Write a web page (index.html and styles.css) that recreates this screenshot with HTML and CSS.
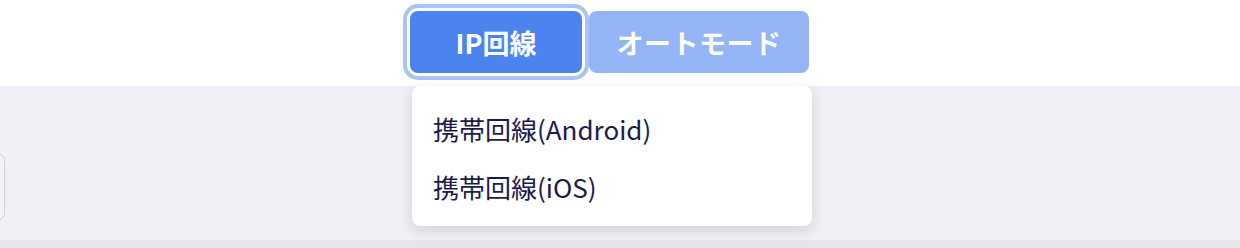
FILE: index.html
```html
<!DOCTYPE html>
<html lang="ja">
<head>
    <meta charset="UTF-8">
    <meta name="viewport" content="width=device-width, initial-scale=1.0">
    <title>回線選択</title>
    <link rel="stylesheet" href="styles.css">
</head>
<body>
    <div class="topbar">
        <div class="mode-switch">
            <button class="mode-btn active">IP回線</button>
            <button class="mode-btn muted">オートモード</button>
            <ul class="line-menu">
                <li>携帯回線(Android)</li>
                <li>携帯回線(iOS)</li>
            </ul>
        </div>
    </div>
    <div class="content">
        <div class="side-box"></div>
    </div>
    <div class="footer-line"></div>
</body>
</html>
```

FILE: styles.css
```css
body {
    margin: 0;
    font-family: "Noto Sans CJK JP", "Noto Sans", sans-serif;
    background-color: #fff;
    overflow: hidden;
}
.topbar {
    height: 86px;
    display: flex;
    justify-content: center;
    align-items: flex-start;
    padding-right: 21px;
    box-sizing: border-box;
}
.mode-switch {
    position: relative;
    display: flex;
    gap: 7px;
    margin-top: 11px;
}
.mode-btn {
    height: 62px;
    border: none;
    border-radius: 8px;
    color: #fff;
    font-family: inherit;
    font-size: 27px;
    font-weight: 700;
    padding: 0;
    cursor: pointer;
}
.mode-btn.active {
    width: 172px;
    background-color: #4b84ee;
    box-shadow: 0 0 0 3px #fff, 0 0 0 7px #a8c4f5;
}
.mode-btn.muted {
    width: 220px;
    letter-spacing: 0.5px;
    background-color: #93b4f5;
}
.line-menu {
    position: absolute;
    top: 75px;
    left: 2px;
    width: 400px;
    margin: 0;
    padding: 14px 0 10px;
    list-style: none;
    background-color: #fff;
    border-radius: 8px;
    box-shadow: 0 4px 14px rgba(30, 30, 60, 0.14);
    z-index: 2;
}
.line-menu li {
    height: 58px;
    line-height: 58px;
    padding-left: 21px;
    font-size: 26px;
    color: #1b1a4a;
}
.content {
    height: 154px;
    background-color: #f0eff5;
    display: flex;
    align-items: flex-start;
}
.side-box {
    width: 100px;
    height: 66px;
    margin-left: -97px;
    margin-top: 67px;
    border: 1px solid #cfcfd4;
    border-radius: 8px;
    background-color: #f2f1f6;
}
.footer-line {
    height: 8px;
    background-color: #e7e7eb;
}
```
